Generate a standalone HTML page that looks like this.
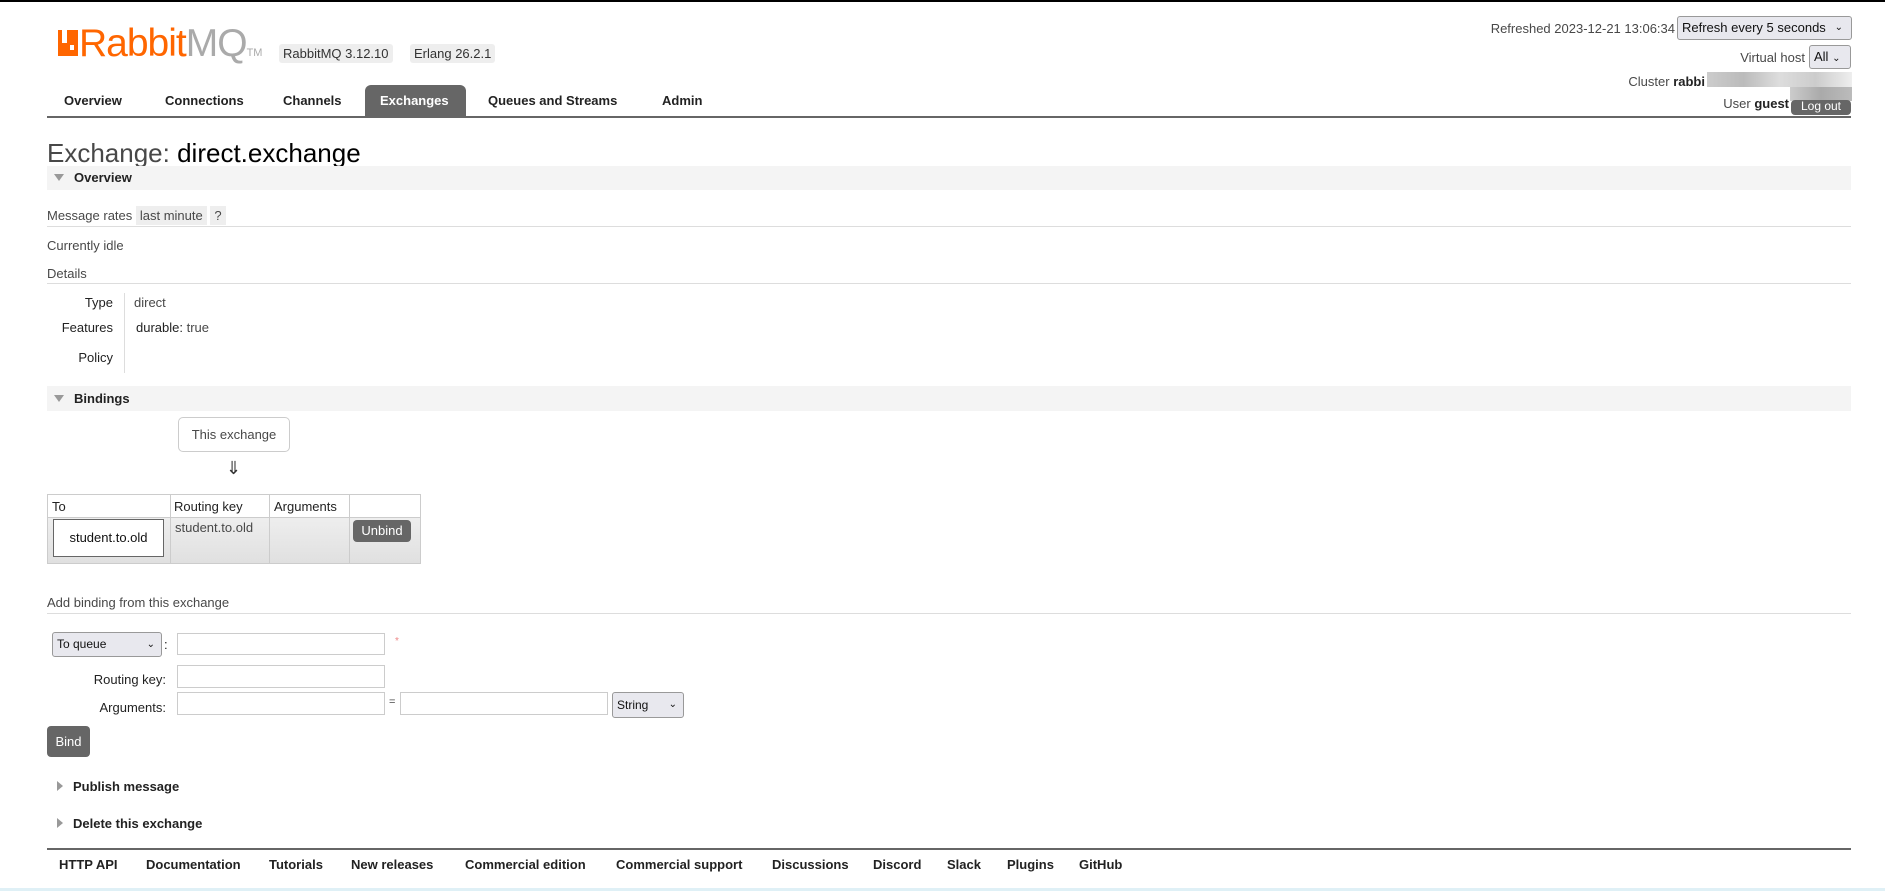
<!DOCTYPE html>
<html><head><meta charset="utf-8"><style>
*{box-sizing:border-box;margin:0;padding:0}
body{width:1885px;height:891px;position:relative;background:#fff;font-family:"Liberation Sans",sans-serif;font-size:13px;color:#484848;overflow:hidden}
.a{position:absolute;white-space:nowrap}
.bar{position:absolute;left:47px;width:1804px;background:#f4f4f4}
.tri{display:inline-block;width:0;height:0;border-left:5px solid transparent;border-right:5px solid transparent;border-top:7px solid #999;margin:0 10px 0 7px;vertical-align:1px}
.rtri{display:inline-block;width:0;height:0;border-top:5px solid transparent;border-bottom:5px solid transparent;border-left:6px solid #999;margin:0 10px 0 10px;vertical-align:0}
.hl{position:absolute;left:47px;width:1804px;height:1px;background:#ddd}
.btn{position:absolute;background:#666;color:#fff;border-radius:4px;text-align:center}
.inp{position:absolute;border:1px solid #ccc;background:#fff}
.sel{position:absolute;border:1px solid #999;background:#e8e8ee;border-radius:3px;color:#111;padding-left:4px}
.b{font-weight:bold;color:#222}
</style></head><body>
<div class="a" style="left:0;top:0;width:1885px;height:2px;background:#000"></div>
<!-- logo -->
<div class="a" style="left:58px;top:30px;width:20px;height:26px;background:#f60"></div>
<div class="a" style="left:62px;top:30px;width:5px;height:13px;background:#fff"></div>
<div class="a" style="left:70px;top:45px;width:4px;height:5px;background:#fff"></div>
<div class="a" style="left:79px;top:22px;font-size:39px;color:#f60;letter-spacing:-1px">Rabbit<span style="color:#aaa">MQ</span><span style="font-size:11px;color:#aaa;letter-spacing:0">TM</span></div>
<div class="a" style="left:279px;top:44px;height:19px;padding:2px 4px;background:#eee;border-radius:3px;color:#333">RabbitMQ 3.12.10</div>
<div class="a" style="left:410px;top:44px;height:19px;padding:2px 4px;background:#eee;border-radius:3px;color:#333">Erlang 26.2.1</div>
<!-- nav -->
<div class="a" style="left:47px;top:116px;width:1804px;height:2px;background:#666"></div>
<div class="a" style="left:365px;top:85px;width:101px;height:32px;background:#666;border-radius:6px 6px 0 0"></div>
<div class="a b" style="left:64px;top:93px">Overview</div>
<div class="a b" style="left:165px;top:93px">Connections</div>
<div class="a b" style="left:283px;top:93px">Channels</div>
<div class="a b" style="left:380px;top:93px;color:#fff">Exchanges</div>
<div class="a b" style="left:488px;top:93px">Queues and Streams</div>
<div class="a b" style="left:662px;top:93px">Admin</div>
<!-- right header -->
<div class="a" style="right:210px;top:21px">Refreshed 2023-12-21 13:06:34</div>
<div class="sel" style="left:1677px;top:16px;width:175px;height:24px;line-height:22px">Refresh every 5 seconds <span style="position:absolute;right:8px;font-size:10px">&#8964;</span></div>
<div class="a" style="right:80px;top:50px">Virtual host</div>
<div class="sel" style="left:1809px;top:45px;width:42px;height:24px;line-height:22px">All <span style="font-size:10px">&#8964;</span></div>
<div class="a" style="right:180px;top:74px">Cluster <b style="color:#222">rabbi</b></div>
<div class="a" style="left:1707px;top:72px;width:145px;height:15px;background:linear-gradient(90deg,#ccc,#bbb,#ddd,#ccc,#eee)"></div>
<div class="a" style="left:1790px;top:87px;width:62px;height:14px;background:linear-gradient(90deg,#ccc,#aaa,#bbb)"></div>
<div class="btn" style="left:1791px;top:100px;width:60px;height:15px;font-size:12px;line-height:12px">Log out</div>
<div class="a" style="right:96px;top:96px">User <b style="color:#222">guest</b></div>
<!-- title -->
<div class="a" style="left:47px;top:138px;font-size:26px;color:#484848">Exchange: <span style="color:#000">direct.exchange</span></div>
<div class="bar" style="top:166px;height:24px;line-height:24px"><span class="tri"></span><b style="color:#222">Overview</b></div>
<div class="a" style="left:47px;top:208px">Message rates <span style="background:#eee;padding:2px 4px">last minute</span> <span style="background:#eee;padding:2px 4px">?</span></div>
<div class="hl" style="top:226px"></div>
<div class="a" style="left:47px;top:238px">Currently idle</div>
<div class="a" style="left:47px;top:266px">Details</div>
<div class="hl" style="top:283px"></div>
<div class="a" style="left:124px;top:293px;width:1px;height:80px;background:#ddd"></div>
<div class="a" style="right:1772px;top:295px;color:#222">Type</div>
<div class="a" style="left:134px;top:295px">direct</div>
<div class="a" style="right:1772px;top:320px;color:#222">Features</div>
<div class="a" style="left:136px;top:320px"><span style="color:#222">durable:</span> true</div>
<div class="a" style="right:1772px;top:350px;color:#222">Policy</div>
<div class="bar" style="top:386px;height:25px;line-height:25px"><span class="tri"></span><b style="color:#222">Bindings</b></div>
<div class="a" style="left:178px;top:417px;width:112px;height:35px;border:1px solid #ccc;border-radius:5px;text-align:center;line-height:33px">This exchange</div>
<div class="a" style="left:226px;top:458px;font-size:18px;color:#333">&#8659;</div>
<!-- table -->
<div class="a" style="left:47px;top:494px;width:374px;height:70px;border:1px solid #ccc;background:#fff"></div>
<div class="a" style="left:48px;top:518px;width:372px;height:45px;background:linear-gradient(#eee,#e0e0e0)"></div>
<div class="a" style="left:47px;top:517px;width:374px;height:1px;background:#ccc"></div>
<div class="a" style="left:170px;top:494px;width:1px;height:70px;background:#ccc"></div>
<div class="a" style="left:269px;top:494px;width:1px;height:70px;background:#ccc"></div>
<div class="a" style="left:349px;top:494px;width:1px;height:70px;background:#ccc"></div>
<div class="a" style="left:52px;top:499px;color:#222">To</div>
<div class="a" style="left:174px;top:499px;color:#222">Routing key</div>
<div class="a" style="left:274px;top:499px;color:#222">Arguments</div>
<div class="a" style="left:53px;top:519px;width:111px;height:38px;border:1px solid #666;background:#fff;text-align:center;line-height:36px;color:#111">student.to.old</div>
<div class="a" style="left:175px;top:520px">student.to.old</div>
<div class="btn" style="left:353px;top:520px;width:58px;height:22px;line-height:22px">Unbind</div>
<!-- add binding -->
<div class="a" style="left:47px;top:595px">Add binding from this exchange</div>
<div class="hl" style="top:613px"></div>
<div class="sel" style="left:52px;top:632px;width:110px;height:25px;line-height:23px;font-size:12px">To queue<span style="position:absolute;right:6px;font-size:10px">&#8964;</span></div>
<div class="a" style="left:164px;top:637px;color:#222">:</div>
<div class="inp" style="left:177px;top:633px;width:208px;height:22px"></div>
<div class="a" style="left:395px;top:636px;color:#e88;font-size:10px">*</div>
<div class="a" style="right:1719px;top:672px;color:#222">Routing key:</div>
<div class="inp" style="left:177px;top:665px;width:208px;height:23px"></div>
<div class="a" style="right:1719px;top:700px;color:#222">Arguments:</div>
<div class="inp" style="left:177px;top:692px;width:208px;height:23px"></div>
<div class="a" style="left:389px;top:696px;font-size:11px">=</div>
<div class="inp" style="left:400px;top:692px;width:208px;height:23px"></div>
<div class="sel" style="left:612px;top:692px;width:72px;height:26px;line-height:24px;font-size:12px">String<span style="position:absolute;right:6px;font-size:10px">&#8964;</span></div>
<div class="btn" style="left:47px;top:726px;width:43px;height:31px;line-height:31px">Bind</div>
<div class="a" style="left:47px;top:779px"><span class="rtri" style="margin-left:10px"></span><b style="color:#222">Publish message</b></div>
<div class="a" style="left:47px;top:816px"><span class="rtri" style="margin-left:10px"></span><b style="color:#222">Delete this exchange</b></div>
<!-- footer -->
<div class="a" style="left:47px;top:848px;width:1804px;height:2px;background:#666"></div>
<div class="a b" style="left:59px;top:857px;word-spacing:0">HTTP API</div>
<div class="a b" style="left:146px;top:857px">Documentation</div>
<div class="a b" style="left:269px;top:857px">Tutorials</div>
<div class="a b" style="left:351px;top:857px">New releases</div>
<div class="a b" style="left:465px;top:857px">Commercial edition</div>
<div class="a b" style="left:616px;top:857px">Commercial support</div>
<div class="a b" style="left:772px;top:857px">Discussions</div>
<div class="a b" style="left:873px;top:857px">Discord</div>
<div class="a b" style="left:947px;top:857px">Slack</div>
<div class="a b" style="left:1007px;top:857px">Plugins</div>
<div class="a b" style="left:1079px;top:857px">GitHub</div>
<div class="a" style="left:0;top:888px;width:1885px;height:3px;background:#dff0f6"></div>
</body></html>
